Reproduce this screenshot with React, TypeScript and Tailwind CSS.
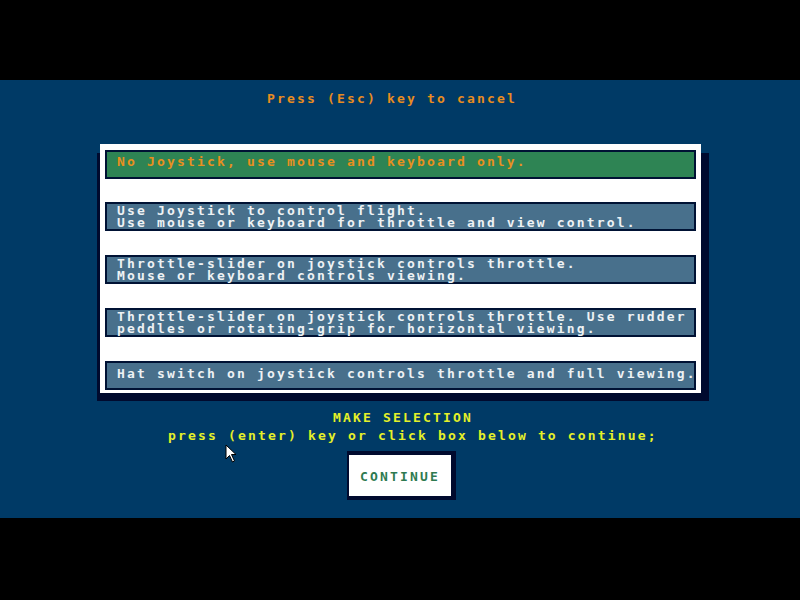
const font = "font-['DejaVu_Sans_Mono','Liberation_Mono',monospace] font-bold text-[13px] leading-[12px] tracking-[2.17px] whitespace-pre";

interface OptionProps {
    lines: string[];
    selected?: boolean;
    className?: string;
}

function Option({ lines, selected, className }: OptionProps) {
    return (
        <div
            className={`h-[29px] border-2 border-[#001234] pl-[10px] ${font} ${
                selected ? "bg-[#2e8454] text-[#e8901e]" : "bg-[#48708c] text-[#eef2f4]"
            } ${className ?? ""}`}
        >
            {lines.map((l, i) => (
                <div key={i}>{l}</div>
            ))}
        </div>
    );
}

function Cursor() {
    return (
        <svg className="absolute left-[225px] top-[364px]" width="14" height="20" viewBox="0 0 14 20">
            <path d="M1 1 L1 15 L4.5 11.5 L7.5 18 L9.5 17 L6.5 10.5 L11 10.5 Z" fill="#fff" stroke="#000" strokeWidth="1" />
        </svg>
    );
}

export default function App() {
    return (
        <div className="w-[800px] h-[600px] bg-black flex flex-col">
            <div className="h-[80px]" />
            <div className="relative h-[438px] bg-[#003a66] flex flex-col">
                <div className={`pt-[13px] pl-[267px] text-[#e88c1e] ${font}`}>Press (Esc) key to cancel</div>

                <div className="relative ml-[100px] mt-[39px] w-[601px] h-[249px]">
                    <div className="absolute left-[-3px] top-[9px] right-[-8px] bottom-[-8px] bg-[#000a2e]" />
                    <div className="relative h-full bg-white px-[5px] pt-[6px] flex flex-col">
                        <Option selected className="pt-[4px]" lines={["No Joystick, use mouse and keyboard only."]} />
                        <Option
                            className="mt-[23px] pt-[1px]"
                            lines={["Use Joystick to control flight.", "Use mouse or keyboard for throttle and view control."]}
                        />
                        <Option
                            className="mt-[24px] pt-[1px]"
                            lines={["Throttle-slider on joystick controls throttle.", "Mouse or keyboard controls viewing."]}
                        />
                        <Option
                            className="mt-[24px] pt-[1px]"
                            lines={["Throttle-slider on joystick controls throttle. Use rudder", "peddles or rotating-grip for horizontal viewing."]}
                        />
                        <Option
                            className="mt-[24px] pt-[5px]"
                            lines={["Hat switch on joystick controls throttle and full viewing."]}
                        />
                    </div>
                </div>

                <div className={`mt-[19px] pl-[333px] text-[#e4f028] ${font}`}>MAKE SELECTION</div>
                <div className={`mt-[6px] pl-[168px] text-[#e4f028] ${font}`}>press (enter) key or click box below to continue;</div>

                <div className="ml-[347px] mt-[9px] w-[109px] h-[49px] border-[#000a2e] border-l-2 border-t-4 border-r-[5px] border-b-4 bg-white flex items-center justify-center pt-[2px]">
                    <span className={`text-[#2e7a50] ${font}`}>CONTINUE</span>
                </div>

                <Cursor />
            </div>
            <div className="flex-1" />
        </div>
    );
}
